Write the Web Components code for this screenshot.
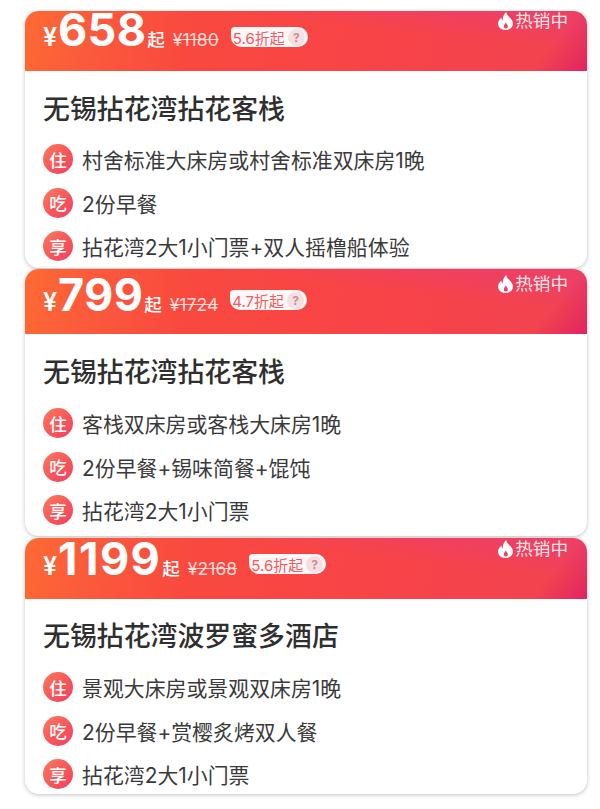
<!DOCTYPE html>
<html lang="zh">
<head>
<meta charset="utf-8">
<style>
  html, body { margin: 0; background: #fff; }
  body {
    width: 600px;
    height: 809px;
    overflow: hidden;
    box-sizing: border-box;
    padding: 11px 13px 0 25px;
    font-family: Inter, "Noto Sans CJK SC", sans-serif;
  }
</style>
</head>
<body>
<deal-card price="658" old="1180" discount="5.6折起" head="60" price-top="-4" tip-top="16" hot-top="-1" title-top="23" perks-top="20" gap-after="1" card-height="257">
  <span slot="title">无锡拈花湾拈花客栈</span>
  <perk-row label="住">村舍标准大床房或村舍标准双床房1晚</perk-row>
  <perk-row label="吃">2份早餐</perk-row>
  <perk-row label="享">拈花湾2大1小门票+双人摇橹船体验</perk-row>
</deal-card>
<deal-card price="799" old="1724" discount="4.7折起" head="65" price-top="3" tip-top="21" hot-top="4" title-top="23" perks-top="21" gap-after="2" card-height="267">
  <span slot="title">无锡拈花湾拈花客栈</span>
  <perk-row label="住">客栈双床房或客栈大床房1晚</perk-row>
  <perk-row label="吃">2份早餐+锡味简餐+馄饨</perk-row>
  <perk-row label="享">拈花湾2大1小门票</perk-row>
</deal-card>
<deal-card price="1199" price-spacing="1.5" old="2168" discount="5.6折起" head="61" price-top="-2" tip-top="16" hot-top="0" title-top="22" perks-top="21" gap-after="0" card-height="256">
  <span slot="title">无锡拈花湾波罗蜜多酒店</span>
  <perk-row label="住">景观大床房或景观双床房1晚</perk-row>
  <perk-row label="吃">2份早餐+赏樱炙烤双人餐</perk-row>
  <perk-row label="享">拈花湾2大1小门票</perk-row>
</deal-card>

<template id="perk-row-tpl">
  <style>
    :host {
      display: flex;
      align-items: center;
      gap: 9px;
      height: 30px;
      color: #3a3a3a;
      font-size: 20.9px;
    }
    .badge {
      flex: none;
      width: 30px;
      height: 30px;
      border-radius: 50%;
      background: linear-gradient(135deg, #fb7a5a 0%, #f8565a 55%, #f23f62 100%);
      color: #fff;
      font-size: 17.5px;
      font-weight: 500;
      display: flex;
      align-items: center;
      justify-content: center;
    }
  </style>
  <span class="badge"></span>
  <span><slot></slot></span>
</template>

<template id="deal-card-tpl">
  <style>
    :host {
      display: block;
      position: relative;
      background: #fff;
      border-radius: 14px;
      box-shadow: 0 1px 4px rgba(0,0,0,.24);
    }
    .head {
      position: relative;
      box-sizing: border-box;
      display: flex;
      align-items: flex-start;
      padding-left: 18px;
      color: #fff;
      border-radius: 14px 14px 0 0;
      background:
        linear-gradient(128deg, transparent 0 91%, rgba(224,30,100,.85) 100%),
        linear-gradient(to top right, transparent 0 66%, rgba(232,60,125,.42) 86%),
        linear-gradient(100deg, #fd6a33 0%, #fb5a3c 12%, #f9483f 30%, #f84348 65%, #f04352 100%);
    }
    .price { display: flex; align-items: baseline; }
    .yen { font-size: 25px; font-weight: 600; margin-right: 1px; }
    .num { font-size: 45px; font-weight: 700; line-height: 1; letter-spacing: .3px; }
    .from { font-size: 17.5px; font-weight: 500; margin-left: 1px; }
    .old {
      font-size: 17.6px;
      color: #ffdad6;
      text-decoration: line-through;
      margin-left: 8px;
    }
    .tip {
      display: flex;
      align-items: center;
      gap: 3px;
      height: 20px;
      box-sizing: border-box;
      padding: 0 3px 0 2px;
      margin-left: 12px;
      background: #fff8f7;
      color: #f05a62;
      font-size: 15px;
      border-radius: 4px 11px 11px 11px;
      white-space: nowrap;
    }
    .q {
      width: 17px;
      height: 17px;
      border-radius: 50%;
      background: #f6dfe2;
      color: #c98f96;
      font-size: 12px;
      font-weight: 700;
      display: flex;
      align-items: center;
      justify-content: center;
    }
    .hot {
      position: absolute;
      right: 19px;
      display: flex;
      align-items: center;
      gap: 1px;
      font-size: 17.6px;
      line-height: 22px;
      color: #fde6e6;
    }
    .hot svg { width: 17px; height: 18px; }
    h2 {
      margin: 0;
      font-size: 26.9px;
      font-weight: 500;
      color: #2f2f2f;
      line-height: 30px;
    }
    .body { padding-left: 18px; }
    .perks { display: grid; row-gap: 13.5px; }
  </style>
  <div class="head">
    <div class="price">
      <span class="yen">¥</span><span class="num"></span><span class="from">起</span>
      <span class="old"></span>
    </div>
    <div class="tip"><span class="disc"></span><span class="q">?</span></div>
    <div class="hot">
      <svg viewBox="0 0 16 18" preserveAspectRatio="none"><path fill="#fff" fill-rule="evenodd" d="M8.6 0c.5 2.600 1.900 3.900 3.400 5.600 1.500 1.700 3 3.600 3 6.200 0 3.500-3 6.200-7 6.200s-7-2.700-7-6.200c0-2.700 1.600-4.800 3.200-6.200 0 1.500.4 2.500 1.200 3.100C5.200 5.400 6.200 2.400 8.600 0zM8.300 10.500c-.7 1.300-1.800 2.200-1.800 3.900 0 1.100.7 2 1.800 2s1.900-.9 1.900-2c0-1.500-1.300-2.500-1.900-3.900z"/></svg>
      <span>热销中</span>
    </div>
  </div>
  <div class="body">
    <h2><slot name="title"></slot></h2>
    <div class="perks"><slot></slot></div>
  </div>
</template>

<script>
class PerkRow extends HTMLElement {
  constructor() {
    super();
    this.attachShadow({ mode: "open" });
    this.shadowRoot.appendChild(document.getElementById("perk-row-tpl").content.cloneNode(true));
  }

  connectedCallback() {
    this.shadowRoot.querySelector(".badge").textContent = this.getAttribute("label");
  }
}

class DealCard extends HTMLElement {
  constructor() {
    super();
    this.attachShadow({ mode: "open" });
    this.shadowRoot.appendChild(document.getElementById("deal-card-tpl").content.cloneNode(true));
  }

  connectedCallback() {
    const root = this.shadowRoot;
    const num = root.querySelector(".num");
    num.textContent = this.getAttribute("price");
    if (this.hasAttribute("price-spacing")) {
      num.style.letterSpacing = `${this.getAttribute("price-spacing")}px`;
    }
    root.querySelector(".old").textContent = `¥${this.getAttribute("old")}`;
    root.querySelector(".disc").textContent = this.getAttribute("discount");
    root.querySelector(".head").style.height = `${this.getAttribute("head")}px`;
    root.querySelector(".price").style.marginTop = `${this.getAttribute("price-top")}px`;
    root.querySelector(".tip").style.marginTop = `${this.getAttribute("tip-top")}px`;
    root.querySelector(".hot").style.top = `${this.getAttribute("hot-top")}px`;
    root.querySelector(".body").style.paddingTop = `${this.getAttribute("title-top")}px`;
    root.querySelector(".perks").style.marginTop = `${this.getAttribute("perks-top")}px`;
    this.style.height = `${this.getAttribute("card-height")}px`;
    this.style.marginBottom = `${this.getAttribute("gap-after")}px`;
  }
}

customElements.define("perk-row", PerkRow);
customElements.define("deal-card", DealCard);
</script>
</body>
</html>
